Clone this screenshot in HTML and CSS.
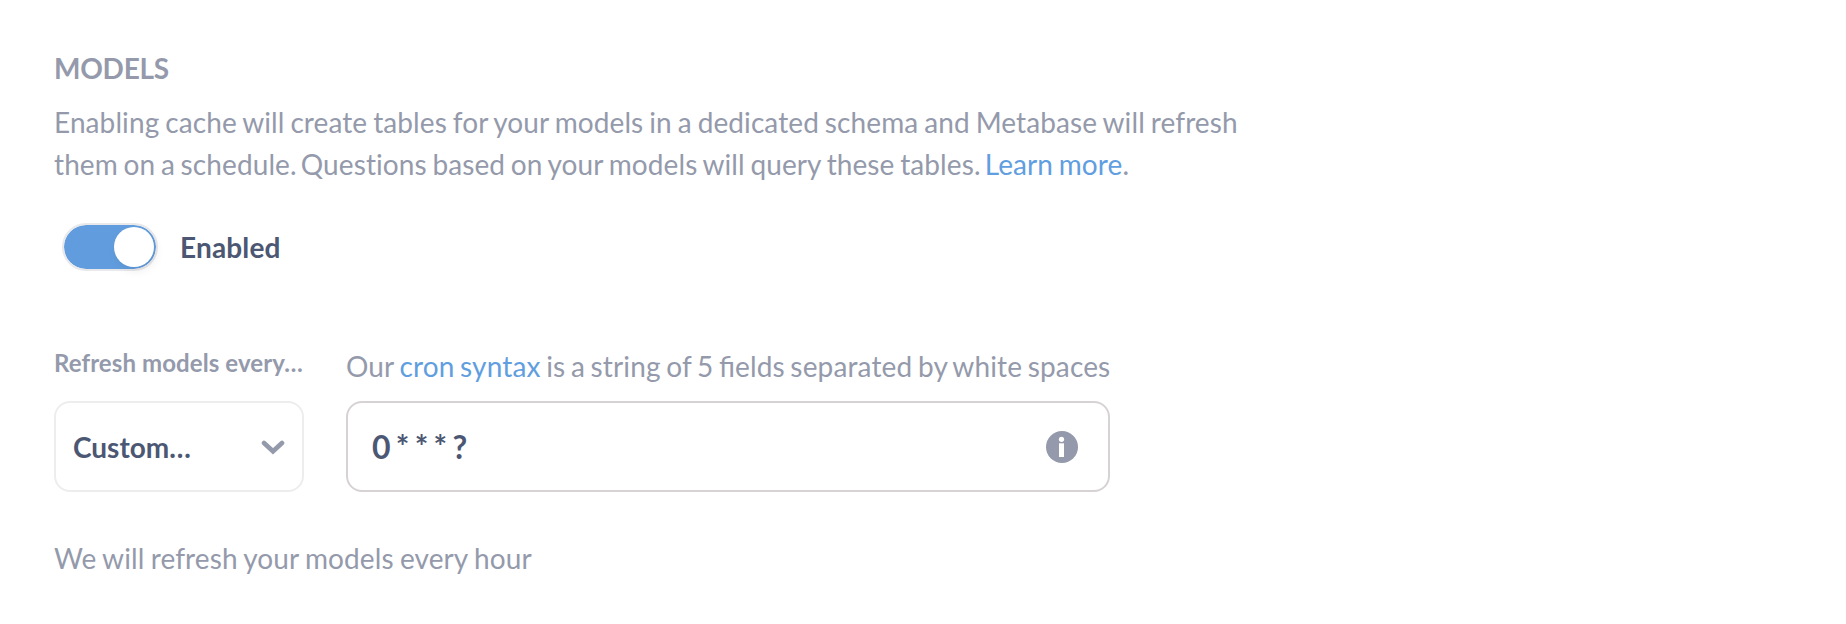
FILE: index.html
```html
<!DOCTYPE html>
<html lang="en">
<head>
<meta charset="utf-8">
<title>Models</title>
<link rel="stylesheet" href="styles.css">
</head>
<body>
<main class="settings">
  <h1 class="title">MODELS</h1>
  <p class="description">Enabling cache will create tables for your models in a dedicated schema and Metabase will refresh<br><span class="second-line">them on a schedule<span class="stop">.</span> Questions based on your models will query these tables<span class="stop">.</span> <a class="link" href="#">Learn more</a>.</span></p>
  <div class="toggle-row">
    <span class="toggle"><span class="knob"></span></span>
    <span class="toggle-label">Enabled</span>
  </div>
  <div class="schedule">
    <div class="field">
      <div class="select-label">Refresh models every…</div>
      <div class="select"><span>Custom…</span>
        <svg class="chevron" viewBox="0 0 24 16"><path d="M3 4 12 12.300 21 4" fill="none" stroke="currentColor" stroke-width="4.600" stroke-linecap="round" stroke-linejoin="miter"/></svg>
      </div>
    </div>
    <div class="field">
      <div class="cron-label">Our <a class="link" href="#">cron syntax</a> is a string of 5 <span class="ligature">fi</span>elds separated by white spaces</div>
      <div class="cron-input"><span>0 * * * ?</span>
        <svg class="info" viewBox="0 0 32 32"><circle cx="16" cy="16" r="16" fill="#949aab"/><circle cx="15.500" cy="8.300" r="2.600" fill="#fff"/><path d="M13 12.300h5v13.700h-5z" fill="#fff"/></svg>
      </div>
    </div>
  </div>
  <p class="summary">We will refresh your models every hour</p>
</main>
</body>
</html>
```

FILE: styles.css
```css
* { box-sizing: border-box; }
body { margin: 0; background: #fff; color: #949aab; font-family: Lato, sans-serif; font-size: 28px; }
.settings { padding: 47px 54px; }
.title { margin: 0; font-size: 28px; line-height: 42px; font-weight: 700; letter-spacing: -0.25px; }
.description { margin: 12px 0 0; line-height: 42px; white-space: nowrap; letter-spacing: 0.1px; word-spacing: -1.35px; }
.second-line { word-spacing: -1.6px; }
.stop { letter-spacing: -1.5px; }
.link { color: #619ee0; text-decoration: none; }
.toggle-row { display: flex; align-items: center; gap: 22px; margin-top: 38px; padding-left: 8px; height: 48px; }
.toggle { width: 96px; height: 48px; padding-right: 2px; border: 2px solid #e9e9eb; border-radius: 24px; background: #619dde; background-clip: padding-box; display: flex; justify-content: flex-end; align-items: center; }
.knob { width: 40px; height: 40px; border-radius: 50%; background: #fff; box-shadow: 2px 4px 10px #00000012; }
.toggle-label { color: #4c5773; font-weight: 700; letter-spacing: 0.15px; }
.schedule { display: flex; gap: 42px; margin-top: 74px; }
.select-label, .cron-label { height: 56px; white-space: nowrap; }
.select-label { font-size: 24px; font-weight: 700; line-height: 36px; letter-spacing: 0.1px; }
.cron-label { line-height: 42px; letter-spacing: 0.15px; word-spacing: -1.75px; }
.ligature { letter-spacing: 0; }
.select, .cron-input { height: 91px; display: flex; align-items: center; justify-content: space-between; color: #4c5773; font-weight: 700; border-radius: 16px; }
.select { width: 250px; border: 2px solid #ededee; padding: 0 17px; }
.cron-input { width: 764px; border: 2px solid #d7d3d5; padding: 0 30px 0 24px; font-size: 32px; word-spacing: -2.5px; }
.chevron { width: 24px; height: 16px; color: #949aab; }
.info { width: 32px; height: 32px; }
.summary { margin: 45px 0 0; line-height: 42px; letter-spacing: 0.1px; word-spacing: -1px; }
```
